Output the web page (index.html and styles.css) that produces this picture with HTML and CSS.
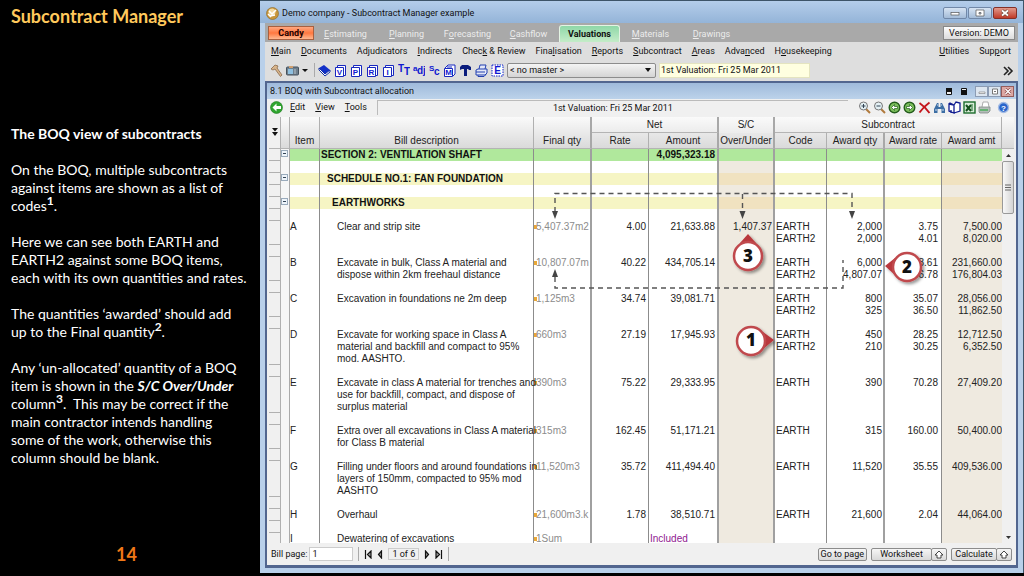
FILE: index.html
```html
<!DOCTYPE html>
<html lang="en">
<head>
<meta charset="utf-8">
<title>Subcontract Manager</title>
<link rel="stylesheet" href="styles.css">
</head>
<body>
<div class="slide">
  <aside class="notes">
    <h1>Subcontract Manager</h1>
    <div class="notes-body">
      <h2>The BOQ view of subcontracts</h2>
      <p>On the BOQ, multiple subcontracts<br>against items are shown as a list of<br>codes<sup>1</sup>.</p>
      <p>Here we can see both EARTH and<br>EARTH2 against some BOQ items,<br>each with its own quantities and rates.</p>
      <p>The quantities ‘awarded’ should add<br>up to the Final quantity<sup>2</sup>.</p>
      <p>Any ‘un-allocated’ quantity of a BOQ<br>item is shown in the <strong><em>S/C Over/Under</em></strong><br>column<sup>3</sup>.&nbsp; This may be correct if the<br>main contractor intends handling<br>some of the work, otherwise this<br>column should be blank.</p>
    </div>
    <div class="page-no">14</div>
  </aside>

  <main class="window">
    <header class="titlebar">
      <svg class="app-icon" width="13" height="13" viewBox="0 0 13 13"><circle cx="6.500" cy="6.500" r="6" fill="#c8963c"/><circle cx="6" cy="5" r="3.500" fill="#f2d9a0"/><path d="M3 4l3 3 4-4M4 9l5-1M2 7l3 3" stroke="#fff" stroke-width="1.500" fill="none"/><circle cx="6.500" cy="6.500" r="6" fill="none" stroke="#94702c" stroke-width=".7"/></svg>
      <span class="title">Demo company - Subcontract Manager example</span>
      <div class="win-btns">
        <button aria-label="Minimise"><svg width="10" height="8" viewBox="0 0 10 8"><rect x="1" y="3.500" width="8" height="2.500" fill="#fff" stroke="#555" stroke-width=".7"/></svg></button>
        <button aria-label="Restore"><svg width="10" height="8" viewBox="0 0 10 8"><path d="M1 1h8v6H1zM4 3.500h2v1.500H4z" fill="#fff" fill-rule="evenodd" stroke="#555" stroke-width=".7"/></svg></button>
        <button class="close" aria-label="Close"><svg width="10" height="8" viewBox="0 0 10 8"><path d="M2 1.500l6 5M8 1.500l-6 5" stroke="#643" stroke-width="3"/><path d="M2 1.500l6 5M8 1.500l-6 5" stroke="#fff" stroke-width="1.800"/></svg></button>
      </div>
    </header>

    <nav class="tabs">
      <button class="candy">Candy</button>
      <button class="tab"><u>E</u>stimating</button>
      <button class="tab"><u>P</u>lanning</button>
      <button class="tab">F<u>o</u>recasting</button>
      <button class="tab"><u>C</u>ashflow</button>
      <button class="tab active">Valuations</button>
      <button class="tab"><u>M</u>aterials</button>
      <button class="tab"><u>D</u>rawings</button>
      <button class="version">Version: DEMO</button>
    </nav>

    <nav class="menu">
      <a href="#"><u>M</u>ain</a><a href="#"><u>D</u>ocuments</a><a href="#">Ad<u>j</u>udicators</a><a href="#"><u>I</u>ndirects</a><a href="#">Chec<u>k</u> &amp; Review</a><a href="#">Fina<u>l</u>isation</a><a href="#"><u>R</u>eports</a><a href="#"><u>S</u>ubcontract</a><a href="#"><u>A</u>reas</a><a href="#">Adva<u>n</u>ced</a><a href="#">H<u>o</u>usekeeping</a>
      <a href="#" class="push"><u>U</u>tilities</a><a href="#">Sup<u>p</u>ort</a>
    </nav>

    <div class="toolbar">
      <button aria-label="Build"><svg width="13" height="13" viewBox="0 0 13 13"><path d="M1 5l4-4 3 1-1 2 5 7-1.500 1.500L5 5 3 6z" fill="#d8b58c" stroke="#8a6a4a" stroke-width=".8"/></svg></button>
      <button aria-label="Snapshot"><svg width="13" height="13" viewBox="0 0 13 13"><rect x=".5" y="3" width="12" height="8" rx="1" fill="#6f7f8c" stroke="#44515c"/><path d="M3 2h4v2H3z" fill="#cf9f70"/><rect x="2" y="5" width="5" height="5" fill="#8fc0e0"/><path d="M9 5v5" stroke="#b8c4cc"/></svg></button>
      <button class="narrow" aria-label="More"><svg width="7" height="13" viewBox="0 0 7 13"><path d="M0 5h6L3 8z" fill="#111"/></svg></button>
      <i class="sep"></i>
      <button aria-label="Book"><svg width="13" height="13" viewBox="0 0 13 13"><path d="M1 4l5-3 6 5-5 4z" fill="#1230c8"/><path d="M1 4l6 6 5-4v2l-5 4-6-6z" fill="#fff" stroke="#1230a8"/></svg></button>
      <button aria-label="V"><svg class="page" width="13" height="13" viewBox="0 0 13 13"><path d="M3.500 3V1.500h8v10H10M1.500 3.500h8v9h-8z"/><text x="5.500" y="11">V</text></svg></button>
      <button aria-label="P"><svg class="page" width="13" height="13" viewBox="0 0 13 13"><path d="M3.500 3V1.500h8v10H10M1.500 3.500h8v9h-8z"/><text x="5.500" y="11">P</text></svg></button>
      <button aria-label="R"><svg class="page" width="13" height="13" viewBox="0 0 13 13"><path d="M3.500 3V1.500h8v10H10M1.500 3.500h8v9h-8z"/><text x="5.500" y="11">R</text></svg></button>
      <button aria-label="I"><svg class="page" width="13" height="13" viewBox="0 0 13 13"><path d="M3.500 3V1.500h8v10H10M1.500 3.500h8v9h-8z"/><text x="5.500" y="11">I</text></svg></button>
      <button aria-label="Text size"><svg class="letters" width="12" height="13" viewBox="0 0 12 13"><text x="0" y="8">T</text><text x="6" y="11">T</text></svg></button>
      <button aria-label="Adjudicate"><svg class="letters" width="12" height="13" viewBox="0 0 12 13"><text class="sm" x="0" y="7">a</text><text x="4" y="10">dj</text></svg></button>
      <button aria-label="Subcontract"><svg class="letters" width="12" height="13" viewBox="0 0 12 13"><text class="sm" x="1" y="7">S</text><text x="6" y="11">c</text></svg></button>
      <button aria-label="M"><svg class="page" width="13" height="13" viewBox="0 0 13 13"><path d="M2 4l3-3h7v9l-2 2M4 3h5M1.500 4.500h8v8h-8z"/><text x="5.500" y="11">M</text></svg></button>
      <button aria-label="Hammer"><svg width="13" height="13" viewBox="0 0 13 13"><path d="M1 3l2-2h6l3 2v3h-2L9 5H8v7H5V5H3L1 6z" fill="#0a1c7c"/></svg></button>
      <button aria-label="Print"><svg width="13" height="13" viewBox="0 0 13 13"><path d="M4 5l1-4h6l-1 4M1 6l2-1h9v4l-2 2H1zM1 8h9M3 11v1.500h6l2-2" fill="#e4e8f8" stroke="#2340b0"/></svg></button>
      <button aria-label="E"><svg class="page" width="13" height="13" viewBox="0 0 13 13"><rect x="1" y="1" width="11" height="11" fill="#fff" stroke="#12c" stroke-dasharray="1.500 1"/><text class="big" x="6.500" y="10">E</text></svg></button>
      <select class="master" aria-label="Master"><option>&lt; no master &gt;</option></select>
      <input class="valuation" aria-label="Valuation" value="1st Valuation: Fri 25 Mar 2011">
      <button class="push" aria-label="More tools"><svg width="11" height="13" viewBox="0 0 11 13"><path d="M1 3l4 4-4 4M5 3l4 4-4 4" fill="none" stroke="#222" stroke-width="1.600"/></svg></button>
    </div>

    <section class="child">
      <header class="child-title">
        <span>8.1 BOQ with Subcontract allocation</span>
        <div class="child-btns">
          <svg width="9" height="9" viewBox="0 0 9 9"><path d="M1.500 1.500h5v6h-5z" fill="#eee" stroke="#111"/><path d="M1 1h6v4H1z" fill="#111"/></svg>
          <svg width="9" height="9" viewBox="0 0 9 9"><path d="M1.500 1.500h5v6h-5z" fill="#eee" stroke="#111"/><path d="M1 3h6v5H1z" fill="#111"/></svg>
          <div class="mini">
            <button aria-label="Minimise pane"><svg width="8" height="7" viewBox="0 0 8 7"><path d="M1 4h6v1.500H1z" fill="#fff" stroke="#777" stroke-width=".6"/></svg></button>
            <button aria-label="Restore pane"><svg width="8" height="7" viewBox="0 0 8 7"><path d="M1.500 1h5v5h-5z" fill="#fff" stroke="#777"/><path d="M3 3h2v1H3z" fill="#777"/></svg></button>
            <button class="close" aria-label="Close pane"><svg width="8" height="7" viewBox="0 0 8 7"><path d="M1.500 1l5 5M6.500 1l-5 5" stroke="#844" stroke-width="2.600"/><path d="M1.500 1l5 5M6.500 1l-5 5" stroke="#fff" stroke-width="1.400"/></svg></button>
          </div>
        </div>
      </header>

      <div class="editbar">
        <button aria-label="Back"><svg width="13" height="13" viewBox="0 0 13 13"><circle cx="6.500" cy="6.500" r="6" fill="#2fa52f" stroke="#1d7a1d" stroke-width=".6"/><path d="M6.500 2.500l-4 4 4 4V8H11V5H6.500z" fill="#fff"/></svg></button>
        <a href="#"><u>E</u>dit</a><a href="#"><u>V</u>iew</a><a href="#"><u>T</u>ools</a>
        <div class="status">1st Valuation: Fri 25 Mar 2011</div>
        <div class="icons">
          <button aria-label="Zoom in"><svg width="13" height="13" viewBox="0 0 13 13"><path d="M8 8l4 4" stroke="#b07a3c" stroke-width="2"/><circle cx="5.500" cy="5" r="4" fill="#e4f0f4" stroke="#777"/><path d="M3.500 5h4M5.500 3v4" stroke="#345"/></svg></button>
          <button aria-label="Zoom out"><svg width="13" height="13" viewBox="0 0 13 13"><path d="M8 8l4 4" stroke="#b07a3c" stroke-width="2"/><circle cx="5.500" cy="5" r="4" fill="#e4f0f4" stroke="#777"/><path d="M3.500 5h4" stroke="#345"/></svg></button>
          <button aria-label="Previous"><svg width="13" height="13" viewBox="0 0 13 13"><circle cx="6.500" cy="6.500" r="5.300" fill="#7cc05c" stroke="#245c1c" stroke-width="1.400"/><path d="M6.500 3.500l-3 3 3 3V7.500h3v-2h-3z" fill="#fff" stroke="#245c1c" stroke-width=".7"/></svg></button>
          <button aria-label="Next"><svg width="13" height="13" viewBox="0 0 13 13"><circle cx="6.500" cy="6.500" r="5.300" fill="#7cc05c" stroke="#245c1c" stroke-width="1.400"/><path d="M6.500 3.500l3 3-3 3V7.500h-3v-2h3z" fill="#fff" stroke="#245c1c" stroke-width=".7"/></svg></button>
          <button aria-label="Delete"><svg width="13" height="13" viewBox="0 0 13 13"><path d="M1.500 2c3 2 7 6 10 10M11.500 1.500C8 4 4 8 1.500 11.500" stroke="#c4161c" stroke-width="1.900" fill="none"/></svg></button>
          <button aria-label="Find"><svg width="13" height="13" viewBox="0 0 13 13"><path d="M1 12V8l3-6h1.500v4h2V2H9l3 6v4H8.500V8h-4v4z" fill="#3c6ea4"/><path d="M2 9h2M9 9h2M4 4h1M8 4h1" stroke="#cfe0f4"/></svg></button>
          <button aria-label="Library"><svg width="13" height="13" viewBox="0 0 13 13"><path d="M1 3v7l5 2V4zM6 12l6-2V2L8 1 6 4M1 3l1-1 4 2M3 9v3" fill="#fff" stroke="#101c90" stroke-width="1.300"/></svg></button>
          <button aria-label="Export to spreadsheet"><svg width="13" height="13" viewBox="0 0 13 13"><rect x="1" y="1" width="11" height="11" fill="#d8ecd8" stroke="#1c6c2c" stroke-width="1.400"/><path d="M3 4l5 6M8 4l-5 6" stroke="#14501c" stroke-width="2"/><path d="M9 3v7" stroke="#1c6c2c"/></svg></button>
          <button aria-label="Print grid"><svg width="13" height="13" viewBox="0 0 13 13"><path d="M4 6l1-5h5l1 5" fill="#fff" stroke="#999" stroke-width=".8"/><path d="M1 6h11v4l-2 2H2l-1-1z" fill="#b4bcb8" stroke="#848c88" stroke-width=".8"/><path d="M2 9h8" stroke="#4cae5c" stroke-width="1.500"/></svg></button>
          <button class="help" aria-label="Help"><svg width="13" height="13" viewBox="0 0 13 13"><circle cx="6.500" cy="6.500" r="5" fill="#2a66cc" stroke="#a4bce4" stroke-width="1.400"/><text x="6.500" y="9.500">?</text></svg></button>
        </div>
      </div>

      <div class="grid">
        <table>
          <colgroup><col class="c-gut"><col class="c-tree"><col class="c-item"><col><col class="c-58"><col class="c-57"><col class="c-70"><col class="c-56"><col class="c-52"><col class="c-58"><col class="c-57"><col class="c-60"></colgroup>
          <thead>
            <tr><th rowspan="2" class="gut-h"><svg width="8" height="10" viewBox="0 0 8 10"><path d="M1 1h6L4 4.500zM1 5h6L4 9z" fill="#111"/></svg></th><th rowspan="2" class="tree"></th><th rowspan="2" class="low">Item</th><th rowspan="2" class="low">Bill description</th><th rowspan="2" class="low dbl">Final qty</th><th colspan="2" class="grp dbl">Net</th><th class="dbl grp-plain">S/C</th><th colspan="4" class="grp">Subcontract</th></tr>
            <tr><th>Rate</th><th class="dbl">Amount</th><th class="dbl">Over/Under</th><th>Code</th><th class="dbl">Award qty</th><th>Award rate</th><th>Award amt</th></tr>
          </thead>
          <tbody>
            <tr class="green"><td></td><td><b class="box"></b></td><td></td><td class="lv0">SECTION 2: VENTILATION SHAFT</td><td></td><td></td><td>4,095,323.18</td><td></td><td></td><td></td><td></td><td></td></tr>
            <tr class="gap"><td></td><td></td><td></td><td></td><td></td><td></td><td></td><td></td><td></td><td></td><td></td><td></td></tr>
            <tr class="yellow"><td></td><td><b class="box"></b></td><td></td><td class="lv1">SCHEDULE NO.1: FAN FOUNDATION</td><td></td><td></td><td></td><td></td><td></td><td></td><td></td><td></td></tr>
            <tr class="gap"><td></td><td></td><td></td><td></td><td></td><td></td><td></td><td></td><td></td><td></td><td></td><td></td></tr>
            <tr class="yellow"><td></td><td><b class="box"></b></td><td></td><td class="lv2">EARTHWORKS</td><td></td><td></td><td></td><td></td><td></td><td></td><td></td><td></td></tr>
            <tr class="gap"><td></td><td></td><td></td><td></td><td></td><td></td><td></td><td></td><td></td><td></td><td></td><td></td></tr>
            <tr><td></td><td></td><td>A</td><td>Clear and strip site</td><td>5,407.37m2</td><td>4.00</td><td>21,633.88</td><td>1,407.37</td><td>EARTH<br>EARTH2</td><td>2,000<br>2,000</td><td>3.75<br>4.01</td><td>7,500.00<br>8,020.00</td></tr>
            <tr class="gap"><td></td><td></td><td></td><td></td><td></td><td></td><td></td><td></td><td></td><td></td><td></td><td></td></tr>
            <tr><td></td><td></td><td>B</td><td>Excavate in bulk, Class A material and<br>dispose within 2km freehaul distance</td><td>10,807.07m</td><td>40.22</td><td>434,705.14</td><td></td><td>EARTH<br>EARTH2</td><td>6,000<br>4,807.07</td><td>38.61<br>36.78</td><td>231,660.00<br>176,804.03</td></tr>
            <tr class="gap"><td></td><td></td><td></td><td></td><td></td><td></td><td></td><td></td><td></td><td></td><td></td><td></td></tr>
            <tr><td></td><td></td><td>C</td><td>Excavation in foundations ne 2m deep</td><td>1,125m3</td><td>34.74</td><td>39,081.71</td><td></td><td>EARTH<br>EARTH2</td><td>800<br>325</td><td>35.07<br>36.50</td><td>28,056.00<br>11,862.50</td></tr>
            <tr class="gap"><td></td><td></td><td></td><td></td><td></td><td></td><td></td><td></td><td></td><td></td><td></td><td></td></tr>
            <tr><td></td><td></td><td>D</td><td>Excavate for working space in Class A<br>material and backfill and compact to 95%<br>mod. AASHTO.</td><td>660m3</td><td>27.19</td><td>17,945.93</td><td></td><td>EARTH<br>EARTH2</td><td>450<br>210</td><td>28.25<br>30.25</td><td>12,712.50<br>6,352.50</td></tr>
            <tr class="gap"><td></td><td></td><td></td><td></td><td></td><td></td><td></td><td></td><td></td><td></td><td></td><td></td></tr>
            <tr><td></td><td></td><td>E</td><td>Excavate in class A material for trenches and<br>use for backfill, compact, and dispose of<br>surplus material</td><td>390m3</td><td>75.22</td><td>29,333.95</td><td></td><td>EARTH</td><td>390</td><td>70.28</td><td>27,409.20</td></tr>
            <tr class="gap"><td></td><td></td><td></td><td></td><td></td><td></td><td></td><td></td><td></td><td></td><td></td><td></td></tr>
            <tr><td></td><td></td><td>F</td><td>Extra over all excavations in Class A material<br>for Class B material</td><td>315m3</td><td>162.45</td><td>51,171.21</td><td></td><td>EARTH</td><td>315</td><td>160.00</td><td>50,400.00</td></tr>
            <tr class="gap"><td></td><td></td><td></td><td></td><td></td><td></td><td></td><td></td><td></td><td></td><td></td><td></td></tr>
            <tr><td></td><td></td><td>G</td><td>Filling under floors and around foundations in<br>layers of 150mm, compacted to 95% mod<br>AASHTO</td><td>11,520m3</td><td>35.72</td><td>411,494.40</td><td></td><td>EARTH</td><td>11,520</td><td>35.55</td><td>409,536.00</td></tr>
            <tr class="gap"><td></td><td></td><td></td><td></td><td></td><td></td><td></td><td></td><td></td><td></td><td></td><td></td></tr>
            <tr><td></td><td></td><td>H</td><td>Overhaul</td><td>21,600m3.k</td><td>1.78</td><td>38,510.71</td><td></td><td>EARTH</td><td>21,600</td><td>2.04</td><td>44,064.00</td></tr>
            <tr class="gap"><td></td><td></td><td></td><td></td><td></td><td></td><td></td><td></td><td></td><td></td><td></td><td></td></tr>
            <tr><td></td><td></td><td>I</td><td>Dewatering of excavations</td><td>1Sum</td><td></td><td class="incl">Included</td><td></td><td></td><td></td><td></td><td></td></tr>
          </tbody>
        </table>
        <div class="scroll">
          <div class="scroll-head"></div>
          <div class="arrow"><svg width="7" height="5" viewBox="0 0 7 5"><path d="M1 4h5L3.500 1z" fill="#333"/></svg></div>
          <div class="thumb"><svg width="6" height="7" viewBox="0 0 6 7"><path d="M0 1h6M0 3.500h6M0 6h6" stroke="#666"/></svg></div>
          <div class="arrow end"><svg width="7" height="5" viewBox="0 0 7 5"><path d="M1 1h5L3.500 4z" fill="#333"/></svg></div>
        </div>
        <svg class="callouts" width="745" height="426" viewBox="269 117 745 426">
          <defs><filter id="sh" x="-30%" y="-30%" width="170%" height="170%"><feDropShadow dx="2" dy="2" stdDeviation="1.500" flood-opacity=".4"/></filter></defs>
          <g fill="none" stroke="#555" stroke-width="1.400" stroke-dasharray="5 4">
            <path d="M555 212v-18.500h297V212M742.500 194v18"/>
            <path d="M555 277v11h288V260"/>
          </g>
          <path d="M552 211h6l-3 8zM739.500 211h6l-3 8zM849 211h6l-3 8zM552 277h6l-3-8z" fill="#444"/>
          <g filter="url(#sh)">
            <path d="M740 243l8-9 8 9z" fill="#b9383c"/><circle cx="748" cy="256" r="14" fill="#fff" stroke="#c04a4e" stroke-width="2.500"/>
            <path d="M895 258l-10 8 10 9z" fill="#b9383c"/><circle cx="907" cy="267" r="14" fill="#fff" stroke="#c04a4e" stroke-width="2.500"/>
            <path d="M763 332l11 8-11 9z" fill="#b9383c"/><circle cx="751" cy="341" r="14" fill="#fff" stroke="#c04a4e" stroke-width="2.500"/>
          </g>
          <g class="pin-no"><text x="748" y="262">3</text><text x="907" y="273">2</text><text x="751" y="346">1</text></g>
        </svg>
      </div>

      <footer class="foot">
        <label for="bp">Bill page:</label><input id="bp" value="1">
        <i class="sep"></i>
        <button class="nav" aria-label="First"><svg width="8" height="9" viewBox="0 0 8 9"><path d="M1.500 0v9M3.500 4.500L7 1v7z" fill="#999" stroke="#111" stroke-width="1.200"/></svg></button>
        <button class="nav" aria-label="Previous page"><svg width="6" height="9" viewBox="0 0 6 9"><path d="M1.500 4.500L4.500 1v7z" fill="#999" stroke="#111" stroke-width="1.200"/></svg></button>
        <span class="count">1 of 6</span>
        <button class="nav" aria-label="Next page"><svg width="6" height="9" viewBox="0 0 6 9"><path d="M4.500 4.500L1.500 1v7z" fill="#999" stroke="#111" stroke-width="1.200"/></svg></button>
        <button class="nav" aria-label="Last"><svg width="8" height="9" viewBox="0 0 8 9"><path d="M6.500 0v9M4.500 4.500L1 1v7z" fill="#999" stroke="#111" stroke-width="1.200"/></svg></button>
        <i class="sep"></i>
        <div class="actions">
          <button class="act">Go to page</button>
          <div class="split"><button class="act wide">Worksheet</button><button class="act up" aria-label="Worksheet options"><svg width="10" height="9" viewBox="0 0 10 9"><path d="M5 1l4 4H7v3H3V5H1z" fill="#fff" stroke="#333" stroke-width=".9"/></svg></button></div>
          <div class="split"><button class="act">Calculate</button><button class="act up" aria-label="Calculate options"><svg width="10" height="9" viewBox="0 0 10 9"><path d="M5 1l4 4H7v3H3V5H1z" fill="#fff" stroke="#333" stroke-width=".9"/></svg></button></div>
        </div>
      </footer>
    </section>
  </main>
</div>
</body>
</html>
```
FILE: styles.css
```css
* { box-sizing: border-box; }
body { margin: 0; background: #000; font-family: Roboto, "Open Sans", sans-serif; font-size: 9px; color: #111; }
button { font: inherit; color: inherit; padding: 0; margin: 0; border: 0; background: none; display: flex; align-items: center; justify-content: center; white-space: nowrap; }
a { color: inherit; text-decoration: none; }
u { text-underline-offset: 1px; }
svg { display: block; flex: none; }

.slide { display: grid; grid-template-columns: 260px minmax(0, 1fr); height: 100vh; padding-bottom: 3px; background: #000; }

.notes { display: flex; flex-direction: column; padding: 5px 6px 8px 11px; color: #fff; font-family: Lato, sans-serif; }
.notes h1 { margin: 0; font-size: 18px; line-height: 22px; color: #ffc95c; white-space: nowrap; }
.notes-body { flex: 1; padding-top: 98px; font-size: 14px; line-height: 18px; white-space: nowrap; }
.notes-body h2 { margin: 0 0 18px; font-size: 14px; line-height: 18px; }
.notes-body p { margin: 0 0 18px; }
.notes-body sup { font-size: 12px; line-height: 0; font-weight: bold; }
.page-no { font-size: 18px; line-height: 22px; font-weight: bold; color: #f07818; text-align: center; padding-right: 12px; }

.window { display: flex; flex-direction: column; min-height: 0; padding: 0 5px 5px; border: 1px solid #3d5468; border-width: 1px 1px 0 0; background: #b9d0ea; }
.titlebar { display: flex; align-items: center; gap: 3px; height: 22px; margin: 0 -5px; padding: 2px 6px 0; background: linear-gradient(#b4cdea, #94b4d8); }
.title { flex: 1; white-space: nowrap; }
.win-btns { display: flex; gap: 1px; }
.win-btns button { width: 24px; height: 12px; border: 1px solid #7188a8; border-radius: 2px; background: linear-gradient(#d6e3f2, #a4bcd8); }
.win-btns .close { background: linear-gradient(#e2998c, #c03a28); border-color: #843028; }

.tabs { display: flex; align-items: flex-end; height: 19px; padding: 0 3px; background: #a9a9a9; color: #ececec; }
.candy { width: 46px; height: 14px; align-self: center; border: 1px solid #a86040; background: linear-gradient(#ffa880, #ff7840 50%, #ffb890); color: #200; font-weight: bold; margin-right: 1px; }
.tab { width: 61px; height: 17px; }
.tab.active { background: linear-gradient(#8fd8a8, #c4ecc8); border: 1px solid #e4f4e4; border-bottom: 0; border-radius: 3px 3px 0 0; color: #111; font-weight: bold; }
.version { margin-left: auto; align-self: center; width: 72px; height: 14px; border: 1px solid #888; background: linear-gradient(#fcfcfc, #dcdcdc); color: #111; }

.menu { display: flex; align-items: center; gap: 10px; height: 17px; padding: 0 7px 0 6px; background: #dedede; white-space: nowrap; }
.push { margin-left: auto; }

.toolbar { display: flex; align-items: center; gap: 3px; height: 22px; padding: 0 4px 0 5px; background: #dedede; }
.toolbar .narrow { margin-right: 2px; }
.sep { width: 1px; height: 14px; background: #aaa; }
.page { fill: #fff; stroke: #1828c0; }
.page text { font: bold 8px "Liberation Sans", sans-serif; fill: #1018d0; stroke: none; text-anchor: middle; }
.page .big { font-size: 10px; }
.letters text { font: bold 10px "Liberation Sans", sans-serif; fill: #1018d0; }
.letters .sm { font-size: 8px; }
.master { width: 149px; height: 15px; appearance: none; border: 1px solid #8c8c8c; border-radius: 2px; background: url("data:image/svg+xml,%3Csvg xmlns='http://www.w3.org/2000/svg' width='7' height='4'%3E%3Cpath d='M0 0h6L3 4z' fill='%23111'/%3E%3C/svg%3E") right 3px center no-repeat, linear-gradient(#f4f4f4, #d4d4d4); font: inherit; padding: 0 2px; color: #111; }
.valuation { width: 151px; height: 15px; border: 1px solid #e4e4c0; background: #ffffe0; font: inherit; padding: 0 1px; color: #111; }

.child { flex: 1; display: flex; flex-direction: column; min-height: 0; border: 2px solid #52668f; border-bottom-width: 3px; background: #f0f0f0; }
.child-title { display: flex; align-items: center; justify-content: space-between; height: 16px; padding: 0 2px 0 3px; background: linear-gradient(#9fbadb, #bcd2ea); }
.child-btns { display: flex; align-items: center; gap: 6px; }
.mini { display: flex; }
.mini button { width: 13px; height: 11px; border: 1px solid #8c9cb4; background: #dde6f0; }
.mini .close { background: #dca8a4; border-color: #945c5c; }

.editbar { display: flex; align-items: center; gap: 10px; height: 16px; padding: 0 6px 0 3px; }
.editbar > button { margin-right: -3px; }
.status { flex: 1; height: 15px; border: 1px solid #bbb; border-width: 1px 0 0 1px; text-align: center; line-height: 14px; }
.icons { display: flex; gap: 2px; }
.icons .help { margin-left: 4px; }
.help text { font: bold 8px "Liberation Sans", sans-serif; fill: #fff; text-anchor: middle; }

.grid { flex: 1; min-height: 0; position: relative; overflow: hidden; display: flex; align-items: stretch; margin: 2px 2px 0; background: #fff; font: 10px/12px "Liberation Sans", sans-serif; color: #222; }
table { flex: 1; align-self: flex-start; table-layout: fixed; width: 100%; border-spacing: 0; white-space: nowrap; }
.c-gut { width: 12px; } .c-tree { width: 9px; } .c-item { width: 30px; }
.c-52 { width: 52px; } .c-56 { width: 56px; } .c-57 { width: 57px; } .c-58 { width: 58px; } .c-60 { width: 60px; } .c-70 { width: 70px; }
th { height: 16px; padding: 0; font-weight: normal; border-right: 1px solid #b0b0b0; border-bottom: 1px solid #b4b4b4; background: linear-gradient(#e8e8e8, #dadada); }
tr:first-child th { background: linear-gradient(#fafafa, #ececec); height: 16px; }
thead tr:first-child th[rowspan] { background: linear-gradient(#fafafa, #dadada); vertical-align: bottom; padding-bottom: 1px; }
thead tr:first-child th.gut-h { background: #f0f0f0; vertical-align: middle; }
thead .grp-plain { border-bottom: 0; }
.gut-h svg { margin: auto; }
th.dbl { border-right: 2px solid #a8a8a8; }
td { height: 12px; padding: 0; vertical-align: top; border-right: 1px solid #8c8c8c; }
td:nth-child(1) { background: #f0f0f0; border: 1px solid #b0b0b0; border-width: 0 1px 1px 0; }
td:nth-child(2) { background: #f6f6f6; border-right-color: #aaa; }
td:nth-child(4) { padding-left: 17px; }
td:nth-child(5) { padding-left: 2px; color: #8c8c8c; border-right: 2px solid #a0a0a0; overflow: hidden; background: linear-gradient(#e8a838, #e8a838) 0 4px / 3px 4px no-repeat; }
td:nth-child(5):empty { background: none; }
td:nth-child(6) { text-align: right; padding-right: 2px; }
td:nth-child(7) { text-align: right; padding-right: 2px; border-right: 2px solid #a0a0a0; }
td:nth-child(8) { text-align: right; padding-right: 1px; border-right: 2px solid #a0a0a0; background: #efeae0; }
td:nth-child(9) { padding-left: 1px; }
td:nth-child(10) { text-align: right; padding-right: 1px; border-right: 2px solid #a0a0a0; }
td:nth-child(11) { text-align: right; padding-right: 3px; }
td:nth-child(12) { text-align: right; border-right: 0; background: #efeae0; }
.green td, .yellow td { font-weight: bold; color: #111; }
.green td:nth-child(n+3) { background: #b0e89c; }
.yellow td:nth-child(n+3) { background: #f6f5c4; }
.yellow td:nth-child(8), .yellow td:nth-child(12) { background: #f0e2c0; }
td.lv0 { padding-left: 1px; } td.lv1 { padding-left: 7px; } td.lv2 { padding-left: 12px; }
td.incl { text-align: left; padding-left: 1px; color: #902090; }
.box { display: block; width: 7px; height: 7px; margin-top: 1px; border: 1px solid #9ab; background: linear-gradient(#345, #345) center / 3px 1px no-repeat #eef4fa; }

.scroll { width: 12px; flex: none; display: flex; flex-direction: column; background: #f0f0f0; }
.scroll-head { height: 32px; background: linear-gradient(#fafafa, #dadada); border-bottom: 1px solid #b4b4b4; }
.arrow { height: 12px; display: flex; align-items: center; justify-content: center; }
.arrow.end { margin-top: auto; }
.thumb { height: 53px; border: 1px solid #999; border-radius: 2px; background: linear-gradient(90deg, #f8f8f8, #d4d4d4); display: flex; align-items: center; justify-content: center; }
.callouts { position: absolute; top: 0; right: 0; }
.pin-no text { font: 800 17px "Open Sans", sans-serif; fill: #111; text-anchor: middle; }

.foot { display: flex; align-items: center; gap: 5px; height: 22px; padding: 0 4px; }
.foot input { width: 44px; height: 14px; border: 1px solid #ccc; background: #fff; font: inherit; color: inherit; padding: 0 2px; margin-left: -3px; }
.count { border: 1px solid #ccc; padding: 0 3px; white-space: nowrap; }
.actions { display: flex; gap: 4px; margin-left: auto; }
.act { min-width: 46px; height: 13px; padding: 0 2px; border: 1px solid #8c8c8c; border-radius: 2px; background: linear-gradient(#f6f6f6, #d8d8d8); }
.act.wide { width: 61px; }
.act.up { width: 16px; min-width: 0; margin-left: -1px; }
.split { display: flex; }
```
